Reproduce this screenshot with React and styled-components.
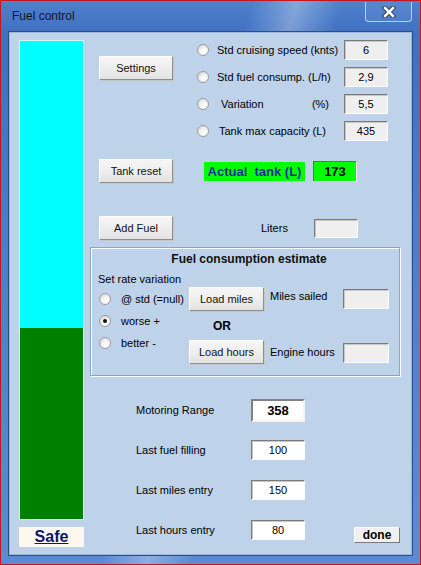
import React from "react";
import styled, { createGlobalStyle } from "styled-components";

const GlobalStyle = createGlobalStyle`
  html, body {
    margin: 0;
    padding: 0;
    overflow: hidden;
    background: #ffffff;
  }
  * {
    box-sizing: border-box;
  }
`;

const params = [
  { label: "Std cruising speed (knts)", value: "6" },
  { label: "Std fuel consump. (L/h)", value: "2,9" },
  { label: "Variation", unit: "(%)", value: "5,5" },
  { label: "Tank max capacity (L)", value: "435" },
];

const rates = [
  { label: "@ std (=null)", checked: false },
  { label: "worse +", checked: true },
  { label: "better -", checked: false },
];

const records = [
  { label: "Last fuel filling", value: "100" },
  { label: "Last miles entry", value: "150" },
  { label: "Last hours entry", value: "80" },
];

// tank level in % of max capacity
const tankLevel = 40;

const CloseIcon = () => (
  <svg width="14" height="12" viewBox="0 0 14 12">
    <path
      d="M3 2 L11 10 M11 2 L3 10"
      stroke="#2a3d63"
      strokeWidth="4.5"
      strokeLinecap="square"
    />
    <path
      d="M3 2 L11 10 M11 2 L3 10"
      stroke="#ffffff"
      strokeWidth="2.5"
      strokeLinecap="square"
    />
  </svg>
);

export default function App() {
  return (
    <>
      <GlobalStyle />
      <Window>
        <TitleBar>
          <Title>Fuel control</Title>
          <CloseButton>
            <CloseIcon />
          </CloseButton>
        </TitleBar>
        <Client>
          <LeftColumn>
            <Gauge>
              <Fill style={{ height: `${tankLevel}%` }} />
            </Gauge>
            <SafeTag>Safe</SafeTag>
          </LeftColumn>

          <RightColumn>
            <TopRow>
              <Button $top={16}>Settings</Button>
              <ParamList>
                {params.map((p) => (
                  <ParamRow key={p.label}>
                    <Radio />
                    <ParamLabel $indent={p.unit ? 4 : p.label.startsWith("Tank") ? 2 : 0}>
                      <span>{p.label}</span>
                      {p.unit && <Unit>{p.unit}</Unit>}
                    </ParamLabel>
                    <Field $w={44}>{p.value}</Field>
                  </ParamRow>
                ))}
              </ParamList>
            </TopRow>

            <TankRow>
              <Button>Tank reset</Button>
              <TankLabel>Actual  tank (L)</TankLabel>
              <TankValue>173</TankValue>
            </TankRow>

            <FuelRow>
              <Button>Add Fuel</Button>
              <LitersLabel>Liters</LitersLabel>
              <Field $w={44} $h={19} />
            </FuelRow>

            <Frame>
              <FrameTitle>Fuel consumption estimate</FrameTitle>
              <Caption>Set rate variation</Caption>
              <FrameBody>
                <RateList>
                  {rates.map((r) => (
                    <RateRow key={r.label}>
                      <Radio $checked={r.checked} />
                      <span>{r.label}</span>
                    </RateRow>
                  ))}
                </RateList>
                <LoadGrid>
                  <Button $w={75}>Load miles</Button>
                  <LoadLabel $dy={-3}>Miles sailed</LoadLabel>
                  <Field $w={46} $mt={-1} />
                  <OrText>OR</OrText>
                  <span />
                  <span />
                  <Button $w={75}>Load hours</Button>
                  <LoadLabel $dy={0}>Engine hours</LoadLabel>
                  <Field $w={46} $mt={2} />
                </LoadGrid>
              </FrameBody>
            </Frame>

            <Summary>
              <SummaryRow>
                <SummaryLabel>Motoring Range</SummaryLabel>
                <RangeField>358</RangeField>
              </SummaryRow>
              {records.map((r, i) => (
                <SummaryRow key={r.label}>
                  <SummaryLabel>{r.label}</SummaryLabel>
                  <Field $w={54} $white>
                    {r.value}
                  </Field>
                  {i === records.length - 1 && <DoneButton>done</DoneButton>}
                </SummaryRow>
              ))}
            </Summary>
          </RightColumn>
        </Client>
      </Window>
    </>
  );
}

const Window = styled.div`
  width: 421px;
  height: 565px;
  border: 1px solid #c4161c;
  display: flex;
  flex-direction: column;
  background:
    linear-gradient(
      105deg,
      rgba(255, 255, 255, 0) 44%,
      rgba(255, 255, 255, 0.3) 52%,
      rgba(255, 255, 255, 0) 60%
    ),
    linear-gradient(180deg, #4f80cc 0%, #3e70c3 6%, #4a7dcc 40%, #5b8bd4 100%);
  font-family: "Liberation Sans", Arial, sans-serif;
  font-size: 11px;
  color: #000;
`;

const TitleBar = styled.div`
  height: 30px;
  display: flex;
  align-items: flex-start;
  padding-left: 11px;
`;

const Title = styled.span`
  margin-top: 8px;
  font-size: 12px;
  color: #101820;
`;

const CloseButton = styled.div`
  margin-left: auto;
  margin-right: 8px;
  margin-top: 1px;
  width: 47px;
  height: 20px;
  border: 1px solid rgba(220, 235, 255, 0.75);
  border-top: none;
  border-radius: 0 0 4px 4px;
  display: flex;
  align-items: center;
  justify-content: center;
  background: rgba(255, 255, 255, 0.06);
`;

const Client = styled.div`
  height: 525px;
  margin: 0 7px;
  border: 1px solid #2e4f86;
  box-shadow: inset 0 0 0 1px #9cb6dc;
  background: #bed3ea;
  display: flex;
`;

const LeftColumn = styled.div`
  width: 75px;
  padding: 8px 0 0 10px;
  display: flex;
  flex-direction: column;
  flex-shrink: 0;
`;

const Gauge = styled.div`
  width: 65px;
  height: 480px;
  border: 1px solid #d6f4f0;
  background: #00ffff;
  display: flex;
  flex-direction: column;
  justify-content: flex-end;
`;

const Fill = styled.div`
  background: #008000;
`;

const SafeTag = styled.div`
  margin-top: 7px;
  width: 65px;
  height: 20px;
  background: #fff8ee;
  display: flex;
  align-items: center;
  justify-content: center;
  font-weight: bold;
  font-size: 16px;
  text-decoration: underline;
  color: #0c1470;
`;

const RightColumn = styled.div`
  margin-left: 6px;
  padding-top: 8px;
  width: 310px;
  display: flex;
  flex-direction: column;
`;

const Button = styled.div`
  width: ${(p) => p.$w || 74}px;
  height: 24px;
  margin-top: ${(p) => p.$top || 0}px;
  flex-shrink: 0;
  display: flex;
  align-items: center;
  justify-content: center;
  background: linear-gradient(180deg, #f6f6f6 0%, #ececec 60%, #e2e2e2 100%);
  border: 1px solid;
  border-color: #ffffff #8e8e8e #8e8e8e #ffffff;
  box-shadow: 1px 1px 0 #c6c6c6;
  font-size: 11px;
  color: #111;
`;

const TopRow = styled.div`
  display: flex;
  padding-left: 9px;
`;

const ParamList = styled.div`
  margin-left: 24px;
  display: flex;
  flex-direction: column;
  gap: 7px;
`;

const ParamRow = styled.div`
  height: 20px;
  display: flex;
  align-items: center;
`;

const Radio = styled.span`
  position: relative;
  width: 12px;
  height: 12px;
  flex-shrink: 0;
  border-radius: 50%;
  border: 1px solid #9a9a9a;
  background: radial-gradient(circle at 65% 70%, #ffffff 0%, #f2f2f2 45%, #cfcfcf 100%);

  &::after {
    content: "";
    display: ${(p) => (p.$checked ? "block" : "none")};
    position: absolute;
    left: 3px;
    top: 3px;
    width: 4px;
    height: 4px;
    border-radius: 50%;
    background: #111;
  }
`;

const ParamLabel = styled.div`
  width: 127px;
  margin-left: 8px;
  padding-left: ${(p) => p.$indent}px;
  display: flex;
  justify-content: space-between;
  white-space: nowrap;
`;

const Unit = styled.span`
  margin-right: 15px;
`;

const Field = styled.div`
  width: ${(p) => p.$w}px;
  height: ${(p) => p.$h || 20}px;
  margin-top: ${(p) => p.$mt || 0}px;
  flex-shrink: 0;
  display: flex;
  align-items: center;
  justify-content: center;
  background: ${(p) => (p.$white ? "#ffffff" : "#efefef")};
  border: 1px solid;
  border-color: #7a7a7a #ffffff #ffffff #7a7a7a;
  box-shadow: inset 1px 1px 0 #c8c8c8;
  font-size: 11px;
`;

const TankRow = styled.div`
  margin-top: 18px;
  padding-left: 9px;
  display: flex;
  align-items: center;
`;

const TankLabel = styled.div`
  margin-left: 31px;
  width: 101px;
  height: 19px;
  background: #00ff00;
  display: flex;
  align-items: center;
  justify-content: center;
  white-space: pre;
  font-weight: bold;
  font-size: 13px;
  color: #1c2aa6;
`;

const TankValue = styled.div`
  margin-left: 8px;
  width: 44px;
  height: 21px;
  background: #00ff00;
  border: 1px solid;
  border-color: #6a6a6a #ffffff #ffffff #6a6a6a;
  display: flex;
  align-items: center;
  justify-content: center;
  font-weight: bold;
  font-size: 13px;
`;

const FuelRow = styled.div`
  margin-top: 33px;
  padding-left: 9px;
  display: flex;
  align-items: center;
`;

const LitersLabel = styled.span`
  margin-left: 88px;
  width: 53px;
`;

const Frame = styled.div`
  margin-top: 7px;
  height: 129px;
  border: 1px solid #8fa4bd;
  box-shadow: inset 1px 1px 0 #ffffff, 1px 1px 0 #ffffff;
  display: flex;
  flex-direction: column;
  padding: 4px 0 0 7px;
`;

const FrameTitle = styled.div`
  text-align: center;
  font-weight: bold;
  font-size: 12px;
  padding-left: 1px;
  color: #111;
`;

const Caption = styled.div`
  margin-top: 7px;
`;

const FrameBody = styled.div`
  display: flex;
  margin-top: 1px;
`;

const RateList = styled.div`
  width: 91px;
  padding: 7px 0 0 1px;
  display: flex;
  flex-direction: column;
  gap: 10px;
`;

const RateRow = styled.div`
  height: 12px;
  display: flex;
  align-items: center;
  gap: 10px;
  white-space: nowrap;
`;

const LoadGrid = styled.div`
  display: grid;
  grid-template-columns: 75px 79px 46px;
  grid-template-rows: 24px 29px 24px;
  align-items: center;
  margin-top: 1px;
`;

const LoadLabel = styled.span`
  padding-left: 6px;
  margin-top: ${(p) => p.$dy * 2}px;
  white-space: nowrap;
`;

const OrText = styled.span`
  font-weight: bold;
  font-size: 12px;
  padding-left: 24px;
  margin-top: 1px;
`;

const Summary = styled.div`
  margin-top: 14px;
  padding-left: 46px;
  display: flex;
  flex-direction: column;
`;

const SummaryRow = styled.div`
  height: 40px;
  display: flex;
  align-items: center;
`;

const SummaryLabel = styled.span`
  width: 115px;
`;

const RangeField = styled.div`
  width: 54px;
  height: 23px;
  background: #ffffff;
  border: 2px solid;
  border-color: #808080 #f4f4f4 #f4f4f4 #808080;
  display: flex;
  align-items: center;
  justify-content: center;
  font-weight: bold;
  font-size: 13px;
`;

const DoneButton = styled.div`
  margin-left: auto;
  margin-top: 9px;
  width: 46px;
  height: 16px;
  display: flex;
  align-items: center;
  justify-content: center;
  background: #f0f0f0;
  border: 1px solid;
  border-color: #ffffff #7a7a7a #7a7a7a #ffffff;
  font-weight: bold;
  font-size: 12px;
`;
